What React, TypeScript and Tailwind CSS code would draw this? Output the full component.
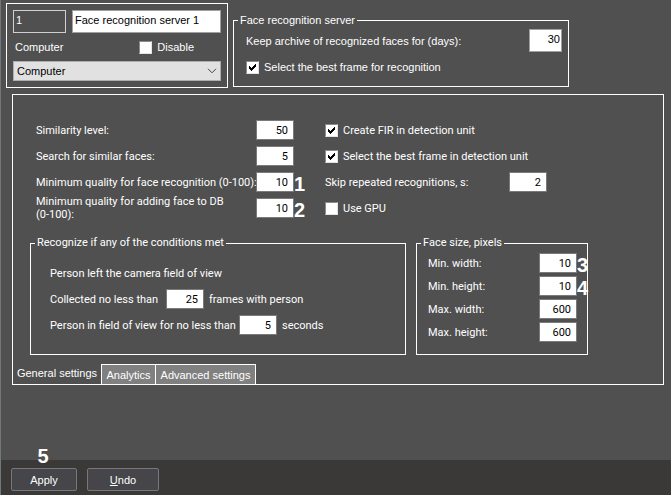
import React from 'react';

interface NumberFieldProps {
  id: string;
  value: string;
  mark?: string;
}

const NumberField: React.FC<NumberFieldProps> = ({ id, value, mark }) => (
  <div className="relative shrink-0">
    <input
      id={id}
      type="text"
      defaultValue={value}
      className="block w-[38px] h-5 bg-white border border-[#7a7a7a] pr-[5px] text-right text-black outline-none"
    />
    {mark && (
      <span className="absolute left-full top-0 font-['Liberation_Sans',sans-serif] text-[20px] leading-6 font-bold text-white">
        {mark}
      </span>
    )}
  </div>
);

interface CheckFieldProps {
  id: string;
  label: string;
  checked?: boolean;
}

const CheckField: React.FC<CheckFieldProps> = ({ id, label, checked }) => (
  <div className="flex items-center gap-[5px]">
    <span className="relative block w-[13px] h-[13px]">
      <input
        id={id}
        type="checkbox"
        defaultChecked={checked}
        className="peer block appearance-none w-[13px] h-[13px] bg-white border border-t-[#8a8a8a] border-l-[#8a8a8a] border-r-[#e3e3e3] border-b-[#e3e3e3]"
      />
      <svg viewBox="0 0 13 13" className="absolute inset-0 hidden peer-checked:block pointer-events-none" fill="black" shapeRendering="crispEdges">
        <path d="M3 5h1v1h1v1h1v-1h1v-1h1v-1h1v-1h1v3h-1v1h-1v1h-1v1h-1v1h-1v-1h-1v-1h-1z" />
      </svg>
    </span>
    <label htmlFor={id}>{label}</label>
  </div>
);

const qualitySettings = [
  { id: 'similarity', label: 'Similarity level:', value: '50' },
  { id: 'similar-faces', label: 'Search for similar faces:', value: '5' },
  { id: 'min-recognition', label: 'Minimum quality for face recognition (0-100):', value: '10', mark: '1' },
  { id: 'min-adding', label: 'Minimum quality for adding face to DB\n(0-100):', value: '10', mark: '2' },
];

const faceSizes = [
  { id: 'min-width', label: 'Min. width:', value: '10', mark: '3' },
  { id: 'min-height', label: 'Min. height:', value: '10', mark: '4' },
  { id: 'max-width', label: 'Max. width:', value: '600' },
  { id: 'max-height', label: 'Max. height:', value: '600' },
];

const App: React.FC = () => {
  return (
    <div className="min-h-screen flex flex-col bg-[#505050] border-l border-[#70787e] font-['Liberation_Sans',sans-serif] text-[11px] leading-[14px] text-white">
      <header className="flex items-start gap-[5px] pt-[3px] pl-[5px] pr-2">
        <div className="w-[222px] shrink-0 border border-white p-1.5">
          <div className="flex gap-1.5">
            <input
              aria-label="Number"
              type="text"
              readOnly
              defaultValue="1"
              className="w-[53px] h-[23px] border border-[#d0d0d0] px-0.5 pb-1 outline-none"
            />
            <input
              aria-label="Name"
              type="text"
              defaultValue="Face recognition server 1"
              className="flex-1 min-w-0 h-[23px] bg-white border border-[#a0a0a0] px-0.5 pb-1 text-black outline-none"
            />
          </div>
          <div className="flex items-center justify-between h-7 pl-0.5 pr-[27px]">
            <label htmlFor="computer">Computer</label>
            <CheckField id="disable" label="Disable" />
          </div>
          <div className="relative">
            <select id="computer" className="block appearance-none w-full h-5 bg-[#e1e1e1] border border-[#adadad] pl-[3px] text-black outline-none">
              <option>Computer</option>
            </select>
            <svg viewBox="0 0 10 6" className="absolute right-1 top-[7px] w-2.5 h-1.5 pointer-events-none" fill="none" stroke="#444">
              <path d="M1 .8l4 4 4-4" />
            </svg>
          </div>
        </div>

        <fieldset className="flex-1 min-w-0 max-w-[336px] mt-2.5 border border-white">
          <legend className="ml-1 px-0.5">Face recognition server</legend>
          <div className="flex flex-col gap-2 pt-0.5 pb-3 pl-3 pr-1.5">
            <div className="flex items-center justify-between">
              <label htmlFor="archive">Keep archive of recognized faces for (days):</label>
              <input
                id="archive"
                type="text"
                defaultValue="30"
                className="w-[33px] h-[23px] bg-white border border-[#a0a0a0] pr-px pb-1 text-right text-black outline-none"
              />
            </div>
            <CheckField id="best-frame" label="Select the best frame for recognition" checked />
          </div>
        </fieldset>
      </header>

      <main className="mt-1.5 ml-[11px] mr-[7px] border border-white">
        <div className="pl-[17px] pt-[22px] font-[Roboto,sans-serif] text-[11px] leading-[13px]">
          <div className="flex gap-[31px] pl-1.5">
            <div className="w-[258px]">
              {qualitySettings.map((item) => (
                <div key={item.id} className="flex items-center justify-between h-[26px]">
                  <label htmlFor={item.id} className="w-[220px] whitespace-pre">{item.label}</label>
                  <NumberField id={item.id} value={item.value} mark={item.mark} />
                </div>
              ))}
            </div>
            <div className="w-[222px] *:h-[26px]">
              <CheckField id="create-fir" label="Create FIR in detection unit" checked />
              <CheckField id="best-frame-unit" label="Select the best frame in detection unit" checked />
              <div className="flex items-center justify-between">
                <label htmlFor="skip">Skip repeated recognitions, s:</label>
                <NumberField id="skip" value="2" />
              </div>
              <CheckField id="gpu" label="Use GPU" />
            </div>
          </div>

          <div className="flex gap-[10px] mt-[15px]">
            <fieldset className="w-[376px] border border-white">
              <legend className="ml-1 px-0.5 leading-[14px]">Recognize if any of the conditions met</legend>
              <div className="pl-[19px] pt-[10px] pb-[15px] *:h-[26px] *:flex *:items-center">
                <p>Person left the camera field of view</p>
                <div>
                  <label htmlFor="frames" className="w-[116px]">Collected no less than</label>
                  <NumberField id="frames" value="25" />
                  <span className="ml-[5px]">frames with person</span>
                </div>
                <div>
                  <label htmlFor="seconds" className="w-[189px]">Person in field of view for no less than</label>
                  <NumberField id="seconds" value="5" />
                  <span className="ml-[5px]">seconds</span>
                </div>
              </div>
            </fieldset>

            <fieldset className="w-[172px] border border-white">
              <legend className="ml-1 px-0.5 leading-[14px]">Face size, pixels</legend>
              <div className="flex flex-col gap-[3px] pt-[3px] pb-3 pl-[11px] pr-2.5">
                {faceSizes.map((item) => (
                  <div key={item.id} className="flex items-center justify-between">
                    <label htmlFor={item.id}>{item.label}</label>
                    <NumberField id={item.id} value={item.value} mark={item.mark} />
                  </div>
                ))}
              </div>
            </fieldset>
          </div>
        </div>

        <nav className="flex mt-[9px]">
          <button className="w-[88px] h-5 pb-0.5">General settings</button>
          <button className="w-[54px] h-5 bg-[#808080] border-t border-l border-white">Analytics</button>
          <button className="w-[101px] h-5 bg-[#808080] border-t border-x border-white">Advanced settings</button>
        </nav>
      </main>

      <footer className="mt-auto flex gap-2.5 h-[35px] pt-2 pl-2.5 bg-[#3b3838]">
        <div className="relative">
          <button className="w-[66px] h-[23px] bg-[#45454a] border border-[#77777c] rounded-xs">Apply</button>
          <span className="absolute left-0 bottom-full w-full pr-0.5 text-center text-[20px] leading-6 font-bold">5</span>
        </div>
        <button className="w-[72px] h-[23px] bg-[#45454a] border border-[#77777c] rounded-xs">
          <span className="underline">U</span>ndo
        </button>
      </footer>
    </div>
  );
};

export default App;
